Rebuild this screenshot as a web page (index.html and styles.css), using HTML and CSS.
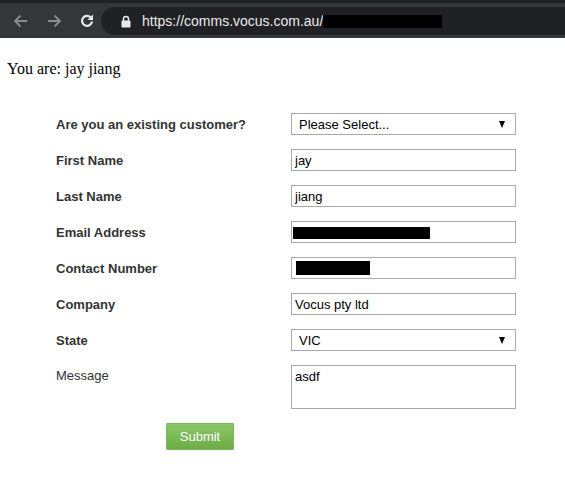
FILE: index.html
```html
<!DOCTYPE html>
<html lang="en">
<head>
  <meta charset="UTF-8">
  <meta name="viewport" content="width=device-width, initial-scale=1.0">
  <title>Contact - Vocus</title>
  <link rel="stylesheet" href="styles.css">
</head>
<body>

  <!-- barra do navegador -->
  <div class="chrome">
    <div class="chrome-top"></div>
    <div class="toolbar">
      <svg class="nav-icon" width="18" height="18" viewBox="0 0 18 18"><path d="M15 9H3.5M8.5 3.5L3 9l5.5 5.5" fill="none" stroke="#8a8b8e" stroke-width="1.8"/></svg>
      <svg class="nav-icon" width="18" height="18" viewBox="0 0 18 18"><path d="M3 9h11.5M9.5 3.5L15 9l-5.5 5.5" fill="none" stroke="#8a8b8e" stroke-width="1.8"/></svg>
      <svg class="nav-icon reload" width="18" height="18" viewBox="0 0 18 18"><path d="M14 9.5A5 5 0 1 1 12.6 5.3" fill="none" stroke="#e8eaed" stroke-width="2.2"/><path d="M15 2.5V8H9.5z" fill="#e8eaed"/></svg>
      <div class="omnibox">
        <svg class="lock" width="10" height="13" viewBox="0 0 10 13"><path d="M2.5 6V4a2.5 2.5 0 0 1 5 0v2" fill="none" stroke="#e8eaed" stroke-width="1.5"/><rect x="0.5" y="5.5" width="9" height="7" rx="1" fill="#e8eaed"/></svg>
        <span class="url">https://comms.vocus.com.au/</span><span class="redact url-redact"></span>
      </div>
    </div>
  </div>

  <div class="page">
    <p class="who">You are: jay jiang</p>

    <form class="contact-form">
      <label class="lbl">Are you an existing customer?</label>
      <span class="select-wrap">
        <select class="field">
          <option>Please Select...</option>
        </select>
      </span>

      <label class="lbl">First Name</label>
      <input class="field" type="text" value="jay">

      <label class="lbl">Last Name</label>
      <input class="field" type="text" value="jiang">

      <label class="lbl">Email Address</label>
      <span class="field-wrap">
        <input class="field" type="text" value="">
        <span class="redact email-redact"></span>
      </span>

      <label class="lbl">Contact Number</label>
      <span class="field-wrap">
        <input class="field" type="text" value="">
        <span class="redact phone-redact"></span>
      </span>

      <label class="lbl">Company</label>
      <input class="field" type="text" value="Vocus pty ltd">

      <label class="lbl">State</label>
      <span class="select-wrap">
        <select class="field">
          <option>VIC</option>
        </select>
      </span>

      <label class="lbl lbl-light">Message</label>
      <textarea class="field message">asdf</textarea>

      <div class="actions">
        <button type="button" class="btn-submit">Submit</button>
      </div>
    </form>
  </div>

</body>
</html>
```

FILE: styles.css
```css
body {
  margin: 0;
  background: #fff;
  font-family: "Liberation Serif", serif;
}

/* barra do navegador */
.chrome {
  background: #35363a;
  height: 38px;
}

.chrome-top {
  height: 3px;
  background: #202124;
}

.toolbar {
  display: flex;
  align-items: center;
  height: 35px;
  padding-left: 12px;
}

.nav-icon {
  margin-right: 15px;
}

.reload {
  margin-right: 5px;
}

.omnibox {
  flex: 1;
  display: flex;
  align-items: center;
  height: 28px;
  margin-top: 1px;
  background: #202124;
  border-radius: 14px 0 0 14px;
  padding-left: 20px;
}

.lock {
  margin-right: 11px;
}

.url {
  color: #e8eaed;
  font-family: "Liberation Sans", sans-serif;
  font-size: 14px;
}

.redact {
  display: inline-block;
  background: #000;
}

.url-redact {
  width: 119px;
  height: 13px;
  margin-top: 1px;
}

/* conteudo */
.page {
  padding: 0 7px;
}

.who {
  margin: 20px 0 0;
  font-size: 16px;
  line-height: 22px;
  color: #000;
}

.contact-form {
  display: grid;
  grid-template-columns: 235px 225px;
  row-gap: 14px;
  margin: 33px 0 0 49px;
  font-family: "Liberation Sans", sans-serif;
}

.lbl {
  font-size: 13px;
  font-weight: bold;
  color: #333;
  line-height: 20px;
  padding-top: 2px;
}

.lbl-light {
  font-weight: normal;
  line-height: 18px;
}

.field {
  box-sizing: border-box;
  width: 225px;
  height: 22px;
  margin: 0;
  border: 1px solid #a9a9a9;
  border-radius: 0;
  padding: 0 3px;
  font-family: "Liberation Sans", sans-serif;
  font-size: 13px;
  color: #000;
  background: #fff;
  outline: none;
}

select.field {
  appearance: none;
  -webkit-appearance: none;
  padding-left: 7px;
}

.select-wrap,
.field-wrap {
  position: relative;
  display: block;
  height: 22px;
}

/* seta do select */
.select-wrap::after {
  content: "";
  position: absolute;
  right: 11px;
  top: 8px;
  border-left: 3.5px solid transparent;
  border-right: 3.5px solid transparent;
  border-top: 7px solid #000;
}

.email-redact {
  position: absolute;
  left: 2px;
  top: 6px;
  width: 137px;
  height: 12px;
}

.phone-redact {
  position: absolute;
  left: 5px;
  top: 4px;
  width: 74px;
  height: 14px;
}

.message {
  height: 44px;
  padding: 3px 3px;
  resize: none;
  line-height: 16px;
}

.actions {
  grid-column: 1 / 3;
  padding: 0 0 0 110px;
}

.btn-submit {
  width: 68px;
  height: 27px;
  border: 1px solid #7cb85b;
  border-radius: 1px;
  background: linear-gradient(#8cc56a, #6cad46);
  color: #fff;
  font-family: "Liberation Sans", sans-serif;
  font-size: 13px;
  padding: 0;
  cursor: pointer;
}
```
